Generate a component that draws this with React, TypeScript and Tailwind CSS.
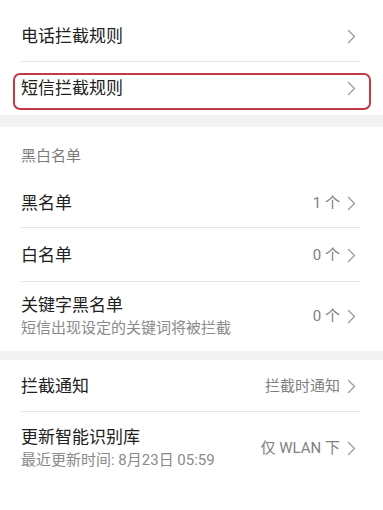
import React from "react";

const font = { fontFamily: 'Roboto, "Noto Sans CJK SC", "Noto Sans", sans-serif' };

function Chevron() {
  return (
    <svg width="9" height="15" viewBox="0 0 9 15" className="shrink-0">
      <polyline points="1.5,1.5 7.5,7.5 1.5,13.5" fill="none" stroke="#9a9a9a" strokeWidth="1.3" strokeLinejoin="round" strokeLinecap="round" />
    </svg>
  );
}

interface RowProps {
  title: string;
  sub?: string;
  value?: string;
  divider?: boolean;
  className?: string;
  highlight?: boolean;
}

function Row({ title, sub, value, divider, className = "h-[52px]", highlight }: RowProps) {
  return (
    <div className={`relative flex items-center pl-[21px] pr-[27px] ${className}`}>
      <div className="flex min-w-0 flex-1 flex-col">
        <div className="text-[17px] leading-[23px] text-[#202020]">{title}</div>
        {sub && <div className="mt-[1px] text-[15px] leading-[21px] text-[#8a8a8a]">{sub}</div>}
      </div>
      <div className="flex items-center gap-[7px]">
        {value && <span className="text-[15px] text-[#808080]">{value}</span>}
        <Chevron />
      </div>
      {divider && <div className="absolute bottom-0 left-[21px] right-[23px] h-px bg-[#e6e6e6]" />}
      {/* red annotation frame */}
      {highlight && (
        <div className="absolute left-[13px] right-[12px] top-[11px] bottom-[5px] rounded-[7px] border-2 border-[#c23a46]" />
      )}
    </div>
  );
}

export default function App() {
  return (
    <div className="min-h-[510px] w-[383px] bg-white" style={font}>
      <div className="pt-[11px]">
        <Row title="电话拦截规则" divider className="h-[51px]" />
        <Row title="短信拦截规则" highlight className="h-[53px]" />
      </div>
      <div className="h-[12px] bg-[#f2f2f2]" />
      <div>
        <div className="flex h-[51px] items-end pb-[11px] pl-[21px] text-[15px] text-[#7c7c7c]">黑白名单</div>
        <Row title="黑名单" value="1 个" divider className="h-[50px]" />
        <Row title="白名单" value="0 个" divider className="h-[54px]" />
        <Row title="关键字黑名单" sub="短信出现设定的关键词将被拦截" value="0 个" className="h-[69px]" />
      </div>
      <div className="h-[9px] bg-[#f2f2f2]" />
      <div>
        <Row title="拦截通知" value="拦截时通知" divider className="h-[52px]" />
        <Row title="更新智能识别库" sub="最近更新时间: 8月23日 05:59" value="仅 WLAN 下" className="h-[72px]" />
      </div>
    </div>
  );
}
